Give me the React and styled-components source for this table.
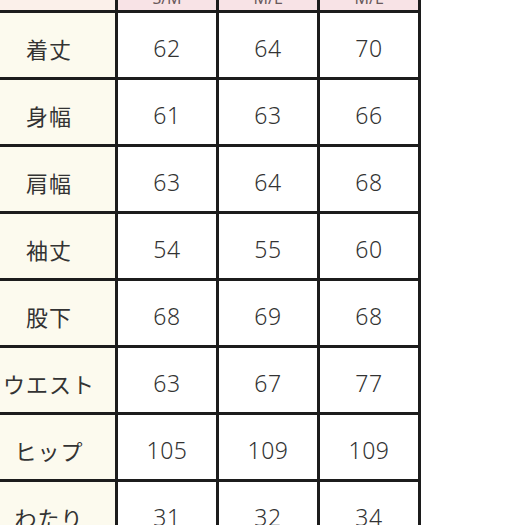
import styled, { createGlobalStyle } from 'styled-components';

const sizes = ['S/M', 'M/L', 'M/L'];

const rows = [
  { label: '着丈', values: [62, 64, 70] },
  { label: '身幅', values: [61, 63, 66] },
  { label: '肩幅', values: [63, 64, 68] },
  { label: '袖丈', values: [54, 55, 60] },
  { label: '股下', values: [68, 69, 68] },
  { label: 'ウエスト', values: [63, 67, 77] },
  { label: 'ヒップ', values: [105, 109, 109] },
  { label: 'わたり', values: [31, 32, 34] },
];

const GlobalStyle = createGlobalStyle`
  html, body {
    margin: 0;
    background: #ffffff;
    overflow: hidden;
  }
`;

const Page = styled.div`
  width: 525px;
  height: 525px;
  overflow: hidden;
  background: #ffffff;
`;

const Grid = styled.div`
  display: grid;
  grid-template-columns: 132px repeat(3, 98px);
  grid-template-rows: 30px;
  grid-auto-rows: 64px;
  gap: 3px;
  padding: 3px;
  background: #1c1c1c;
  width: max-content;
  margin: -23px 0 0 -20px;
`;

const Cell = styled.div`
  display: flex;
  align-items: center;
  justify-content: center;
  padding-top: 6px;
  box-sizing: border-box;
  background: ${({ $label }) => ($label ? '#fcfaee' : '#ffffff')};
  color: #333333;
  font-family: ${({ $label }) =>
    $label
      ? '"Noto Sans CJK JP", "Noto Sans", sans-serif'
      : '"Noto Sans", "DejaVu Sans", sans-serif'};
  font-size: ${({ $label }) => ($label ? '22px' : '23px')};
  font-weight: ${({ $label }) => ($label ? 400 : 300)};
  letter-spacing: ${({ $label }) => ($label ? '1px' : '0.5px')};
`;

const HeadCell = styled.div`
  display: flex;
  align-items: flex-end;
  justify-content: center;
  padding-bottom: 4px;
  box-sizing: border-box;
  background: ${({ $corner }) => ($corner ? '#fbf0ea' : '#f8e3e6')};
  color: #6a5a5c;
  font-family: "Noto Sans", sans-serif;
  font-size: 16px;
  line-height: 1;
`;

export default function App() {
  return (
    <Page>
      <GlobalStyle />
      <Grid>
        <HeadCell $corner />
        {sizes.map((s, i) => (
          <HeadCell key={'h' + i}>{s}</HeadCell>
        ))}
        {rows.flatMap((row) => [
          <Cell $label key={row.label}>{row.label}</Cell>,
          ...row.values.map((v, i) => <Cell key={row.label + i}>{v}</Cell>),
        ])}
      </Grid>
    </Page>
  );
}
